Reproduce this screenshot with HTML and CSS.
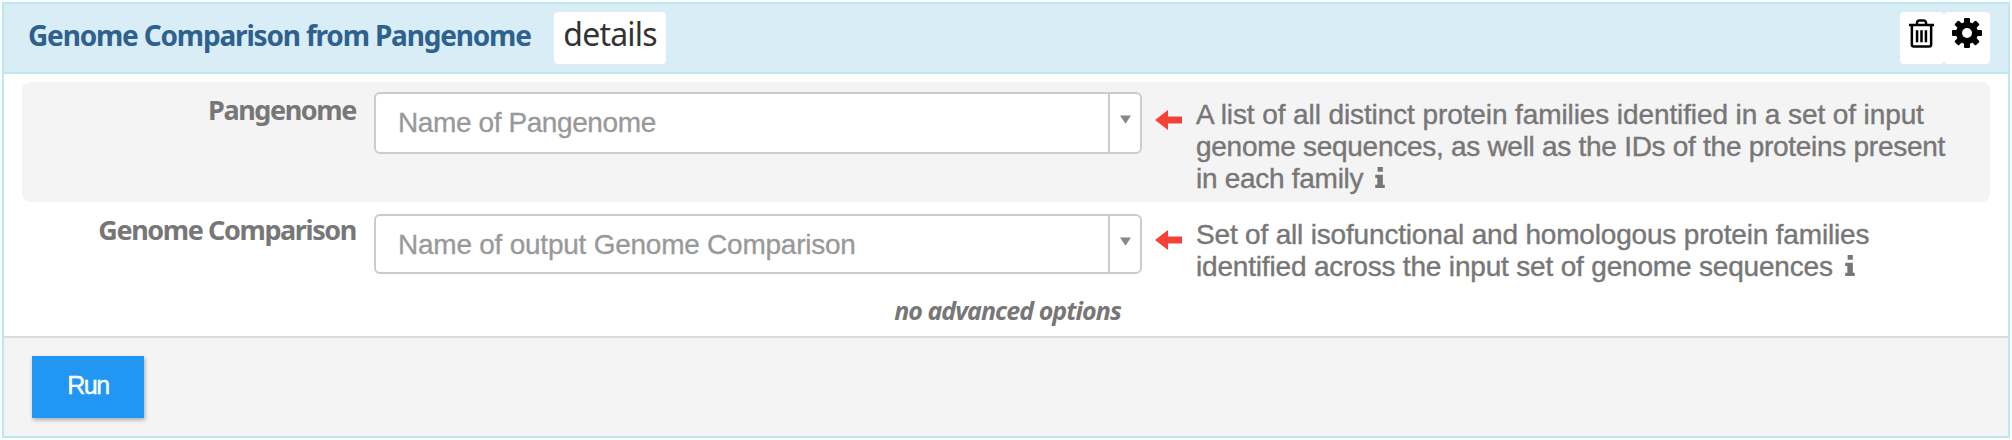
FILE: index.html
```
<!DOCTYPE html>
<html lang="en">
<head>
<meta charset="utf-8">
<title>Genome Comparison from Pangenome</title>
<link rel="stylesheet" href="styles.css">
</head>
<body>
<section class="panel">
  <header class="panel-header">
    <h1 class="title">Genome Comparison from Pangenome</h1>
    <button class="details">details</button>
    <div class="tools">
      <button class="tool tool-delete" aria-label="Delete">
        <svg class="trash" viewBox="0 0 28 32" fill="none" stroke="#000" stroke-width="2.6">
          <path d="M1 7.2h26M9.3 7V5.2Q9.300 2.400 12 2.400h4Q18.700 2.400 18.700 5.200V7M4 7.500V27.500Q4 29.500 6 29.500H22Q24 29.500 24 27.500V7.500M9.400 12.500V25M14 12.500V25M18.600 12.500V25"/>
        </svg>
      </button>
      <button class="tool tool-settings" aria-label="Settings">
        <svg class="gear" viewBox="-15 -15 30 30">
          <g fill="#000">
            <rect x="-3" y="-15" width="6" height="30" rx="1"/>
            <rect x="-3" y="-15" width="6" height="30" rx="1" transform="rotate(45)"/>
            <rect x="-3" y="-15" width="6" height="30" rx="1" transform="rotate(90)"/>
            <rect x="-3" y="-15" width="6" height="30" rx="1" transform="rotate(135)"/>
            <circle r="11"/>
          </g>
          <circle r="5" fill="#fff"/>
        </svg>
      </button>
    </div>
  </header>
  <div class="panel-body">
    <div class="row row-shaded">
      <div class="label">Pangenome</div>
      <div class="select">
        <div class="placeholder">Name of Pangenome</div>
        <div class="drop"><svg class="caret" viewBox="0 0 12 9"><path d="M0 0h12L6 9z" fill="#888"/></svg></div>
      </div>
      <svg class="arrow" viewBox="0 0 27 20"><path d="M0 10L13 0V6.500H27V13.500H13V20z" fill="#f44336"/></svg>
      <p class="hint"><span class="loose">A list of all distinct protein families identified in a set of input</span><br><span class="tight">genome sequences, as well as the IDs of the proteins present</span><br><span class="tight">in each family</span><svg class="info" viewBox="0 0 10 22"><path d="M2.500 0H8V5H2.500zM0 8H8V18.500H10V22H0V18.500H2.200V11.500H0z" fill="#777"/></svg></p>
    </div>
    <div class="row row-plain">
      <div class="label">Genome Comparison</div>
      <div class="select">
        <div class="placeholder">Name of output Genome Comparison</div>
        <div class="drop"><svg class="caret" viewBox="0 0 12 9"><path d="M0 0h12L6 9z" fill="#888"/></svg></div>
      </div>
      <svg class="arrow" viewBox="0 0 27 20"><path d="M0 10L13 0V6.500H27V13.500H13V20z" fill="#f44336"/></svg>
      <p class="hint">Set of all isofunctional and homologous protein families<br>identified across the input set of genome sequences<svg class="info" viewBox="0 0 10 22"><path d="M2.500 0H8V5H2.500zM0 8H8V18.500H10V22H0V18.500H2.200V11.500H0z" fill="#777"/></svg></p>
    </div>
    <div class="advanced">no advanced options</div>
  </div>
  <footer class="panel-footer"><button class="run">Run</button></footer>
</section>
</body>
</html>
```
FILE: styles.css
```
* { box-sizing: border-box; }
body {
  margin: 0;
  padding: 2px;
  height: 440px;
  background: #fff;
  font-family: "Liberation Sans", Arial, sans-serif;
  color: #777;
}
button { border: 0; margin: 0; padding: 0; font: inherit; }
svg { display: block; flex: none; }
.panel {
  height: 436px;
  border: 2px solid #bce8f1;
  display: flex;
  flex-direction: column;
}
.panel-header {
  height: 70px;
  flex: none;
  display: flex;
  align-items: flex-start;
  padding: 8px 18px 0 24px;
  background: #d9edf7;
  border-bottom: 2px solid #bce8f1;
}
.title {
  width: 526px;
  margin: 0;
  font: bold 28px/46px "Noto Sans", "Open Sans", sans-serif;
  letter-spacing: -1.18px;
  color: #2e618d;
  white-space: nowrap;
}
.details {
  width: 112px;
  height: 52px;
  padding-bottom: 8px;
  border-radius: 4px;
  background: #fff;
  color: #333;
  font: 32px/44px "Noto Sans", "Open Sans", sans-serif;
  letter-spacing: -0.8px;
}
.tools { display: flex; margin-left: auto; }
.tool {
  height: 52px;
  border-radius: 4px;
  background: #fff;
  display: flex;
  padding-top: 6px;
}
.tool-delete { width: 44px; padding-left: 8px; }
.tool-settings { width: 46px; padding-left: 8px; }
.trash { width: 27px; height: 31px; }
.gear { width: 30px; height: 30px; }
.panel-body { height: 262px; flex: none; padding: 8px 18px 0; }
.row {
  display: flex;
  align-items: flex-start;
  padding: 10px 0 0;
  border-radius: 8px;
}
.row-shaded { height: 120px; background: #f4f4f4; }
.row-plain { height: 82px; padding-top: 12px; }
.label {
  width: 334px;
  margin-right: 18px;
  text-align: right;
  font: bold 27px/36px "Noto Sans", "Open Sans", sans-serif;
  letter-spacing: -1.4px;
  white-space: nowrap;
}
.row-plain .label { margin-top: -2px; }
.select {
  width: 768px;
  height: 62px;
  display: flex;
  border: 2px solid #ccc;
  border-radius: 6px;
  background: #fff;
}
.row-plain .select { height: 60px; }
.placeholder {
  flex: 1;
  padding-left: 22px;
  font-size: 28px;
  line-height: 58px;
  letter-spacing: -0.4px;
  color: #999;
  -webkit-text-stroke: 0.3px #999;
}
.row-plain .placeholder { letter-spacing: -0.24px; }
.drop {
  width: 32px;
  border-left: 2px solid #ccc;
  padding: 21px 0 0 10px;
}
.caret { width: 11px; height: 9px; }
.arrow { width: 27px; height: 20px; margin: 18px 14px 0 13px; }
.row-plain .arrow { margin-top: 16px; }
.hint {
  margin: 7px 0 0;
  font-size: 28px;
  line-height: 32px;
  letter-spacing: -0.18px;
  white-space: nowrap;
  -webkit-text-stroke: 0.4px #777;
}
.row-plain .hint { margin-top: 5px; }
.loose { letter-spacing: -0.1px; }
.tight { letter-spacing: -0.28px; }
.info { display: inline-block; width: 10px; height: 21px; margin-left: 12px; }
.advanced {
  text-align: center;
  font: italic bold 25px/36px "Noto Sans", "Open Sans", sans-serif;
  letter-spacing: -0.95px;
  padding: 8px 0 0 3px;
}
.panel-footer {
  flex: 1;
  display: flex;
  align-items: flex-start;
  padding: 18px 28px 0;
  border-top: 2px solid #ddd;
  background: #f4f4f4;
}
.run {
  width: 112px;
  height: 62px;
  padding-bottom: 4px;
  background: #2196f3;
  color: #fff;
  font-size: 25px;
  letter-spacing: -1.5px;
  -webkit-text-stroke: 0.4px #fff;
  box-shadow: 1px 2px 4px rgba(0, 0, 0, 0.3);
}
```
